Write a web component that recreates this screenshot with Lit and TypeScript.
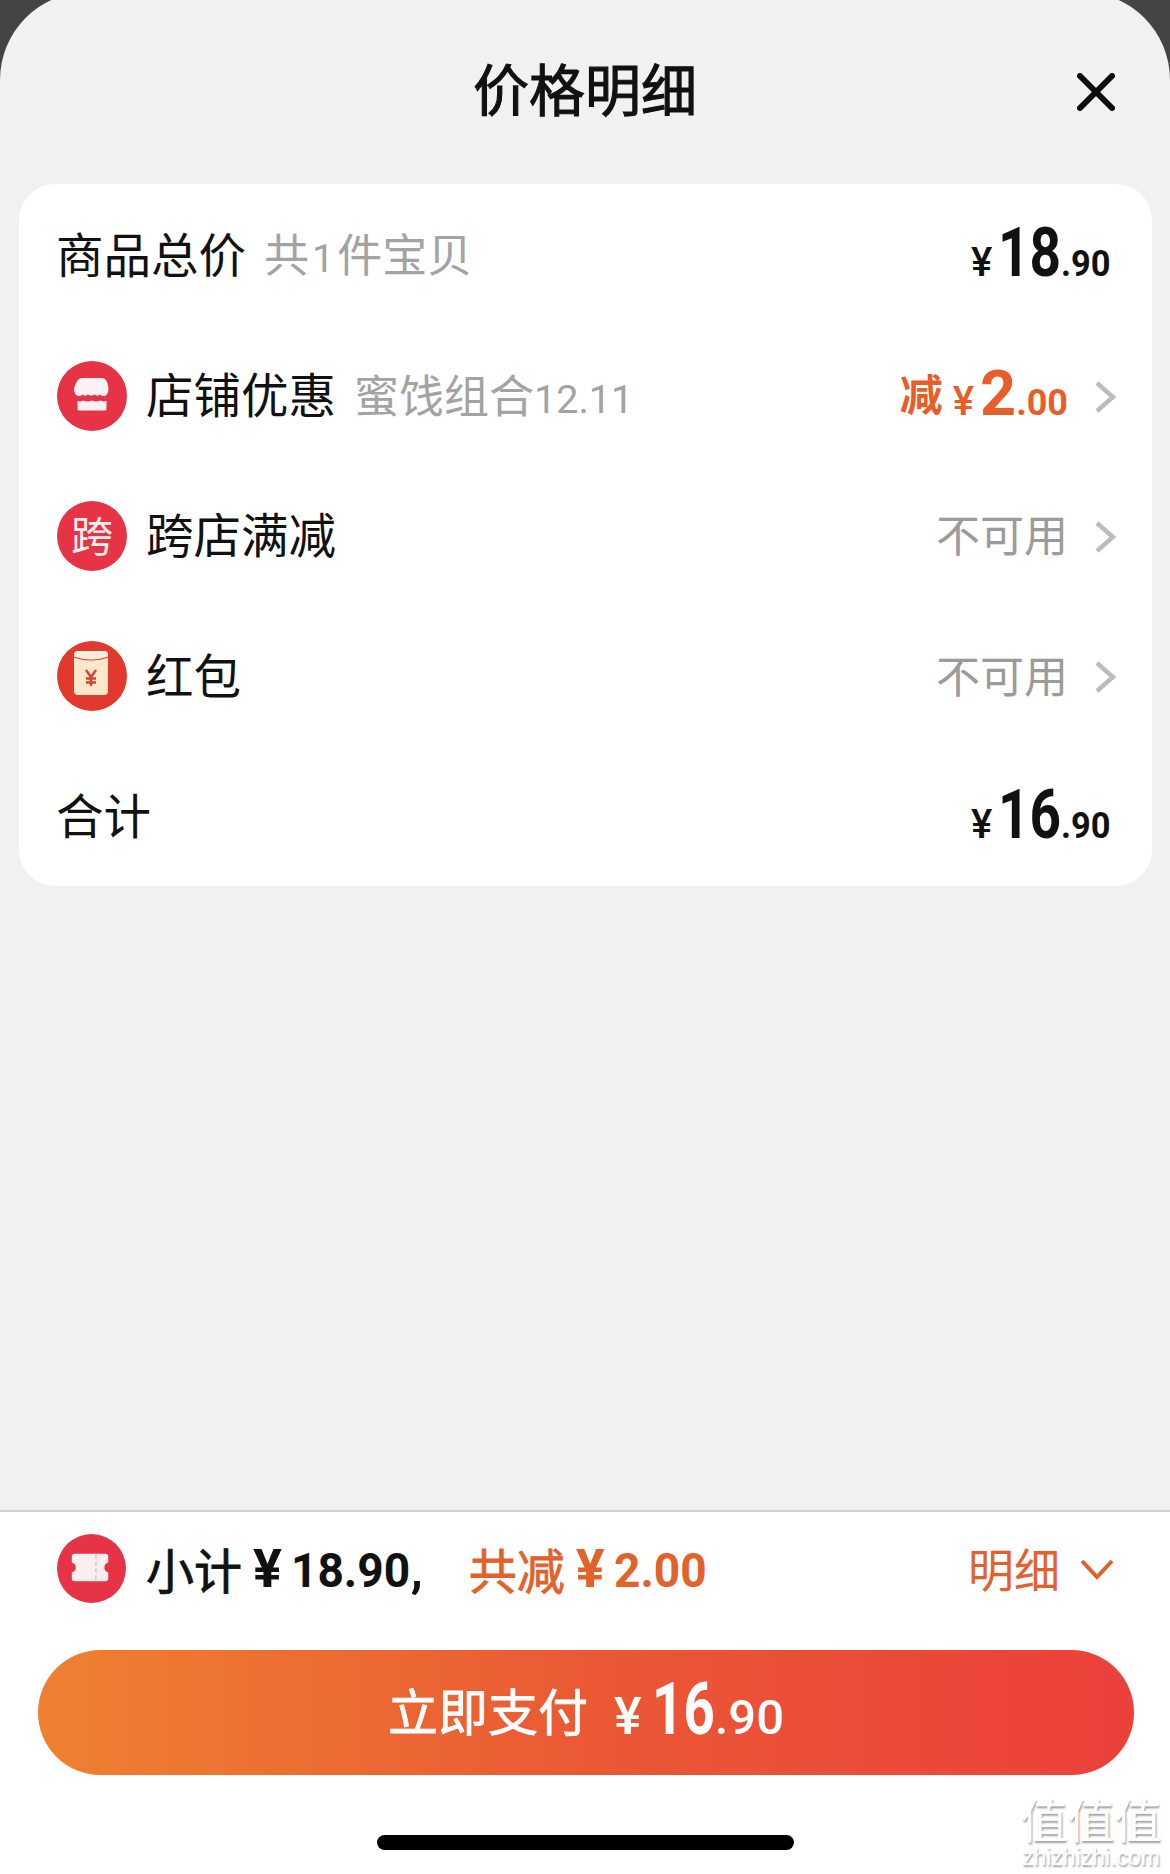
import { LitElement, html, css, svg } from 'lit';
import { customElement } from 'lit/decorators.js';

const chevron = html`<svg class="chev" viewBox="0 0 22 34"><path d="M3 3l16 14L3 31" /></svg>`;

// price with small currency sign, big integer part and small decimals
function price(int: string, dec: string, cls = '') {
  return html`<span class="price ${cls}"><span class="yen">¥</span><span class="int">${int}</span><span class="dec">.${dec}</span></span>`;
}

const shopIcon = svg`
  <circle cx="35" cy="35" r="35" fill="#e73346" />
  <path d="M25 17h20c3.500 0 6 4 6.500 10.500.2 3-1 6-3 7-2 1-4 .5-5.500-1-1.500 1.500-4 1.500-5.500 0-1.500 1.500-5 1.500-6.500 0-1.500 1.500-4 1.500-5.500 0-1.500 1.500-3.500 2-5.500 1-2-1-3.200-4-3-7C19 21 21.500 17 25 17z" fill="#fdf1f1" />
  <path d="M20.500 40c2 .8 4 .6 6-.6 2.500 1.500 5 1.500 8.500 0 3 1.500 6 1.500 8.500 0 2 1.200 4 1.400 6 .6v8c0 1-.7 1.500-1.500 1.500h-26c-.8 0-1.500-.5-1.500-1.500z" fill="#fdf1f1" />`;

const packetIcon = svg`
  <circle cx="35" cy="35" r="35" fill="#e2392e" />
  <rect x="17" y="10" width="34" height="44" rx="4" fill="#fbe8cc" />
  <path d="M17 14c0-2.500 1.500-4 4-4h26c2.500 0 4 1.500 4 4v2c-10 4-24 4-34 0z" fill="#f9efe0" />
  <path d="M17 16c10 4 24 4 34 0" fill="none" stroke="#d8452f" stroke-width="1.200" />
  <path d="M29 29l5 7 5-7M34 36v9M29 37.500h10M29 41.500h10" fill="none" stroke="#d8402f" stroke-width="2.400" />`;

const ticketIcon = svg`
  <circle cx="35" cy="35" r="35" fill="#e73346" />
  <path d="M18 20h31c2 0 3 1 3 3v6c-2.500.5-4 2.500-4 5s1.500 4.500 4 5v6c0 2-1 3-3 3H18c-2 0-3-1-3-3v-6c2.500-.5 4-2.500 4-5s-1.500-4.500-4-5v-6c0-2 1-3 3-3z" fill="#fbeeee" />
  <path d="M39.500 21v26" stroke="#e9b9bc" stroke-width="1.500" stroke-dasharray="4 3" />`;

@customElement('app-root')
export class AppRoot extends LitElement {
  static styles = css`
    :host {
      display: block;
      width: 1170px;
      height: 1874px;
      background: #444;
      overflow: hidden;
      font-family: 'Noto Sans CJK SC', 'Liberation Sans', sans-serif;
      color: #111;
    }
    .sheet {
      position: relative;
      height: 1874px;
      margin-top: -8px;
      padding-top: 8px;
      box-sizing: content-box;
      border-radius: 88px 88px 0 0;
      background: #f1f1f1;
      display: flex;
      flex-direction: column;
    }
    .head {
      height: 184px;
      flex: none;
      display: flex;
      justify-content: center;
      position: relative;
    }
    .title {
      font-size: 56px;
      -webkit-text-stroke: 1.1px #111;
      line-height: 174px;
    }
    .close {
      position: absolute;
      left: 1077px;
      top: 73px;
      width: 38px;
      height: 38px;
    }
    .close path {
      fill: none;
      stroke: #0d0d0d;
      stroke-width: 6;
      stroke-linecap: round;
    }
    .card {
      margin: 0 18px 0 19px;
      background: #fff;
      border-radius: 36px;
      flex: none;
      display: flex;
      flex-direction: column;
    }
    .row {
      height: 140.4px;
      display: flex;
      align-items: center;
      padding: 0 36px 0 37px;
      font-size: 47.5px;
    }
    .label {
      margin-bottom: 4px;
    }
    .row .ico {
      width: 70px;
      height: 70px;
      margin: 2px 19px 0 1px;
      flex: none;
      display: block;
    }
    .kua {
      width: 70px;
      height: 70px;
      margin: 2px 19px 0 1px;
      border-radius: 50%;
      background: #e73346;
      color: #fdeff0;
      font-size: 42px;
      line-height: 66px;
      text-align: center;
      flex: none;
    }
    .note {
      color: #a3a3a3;
      font-size: 45px;
      margin: 0 0 3px 18px;
    }
    .note .num {
      font-family: 'Roboto', sans-serif;
      font-size: 39.5px;
    }
    .note .one {
      margin: 0 3px;
    }
    .grow {
      flex: 1;
    }
    .off {
      color: #9b9b9b;
      font-size: 44px;
      margin: 0 26px 3px 0;
    }
    .chev {
      width: 22px;
      height: 34px;
      margin-top: 4px;
      flex: none;
    }
    .chev path {
      fill: none;
      stroke: #bcbcbc;
      stroke-width: 4.500;
    }
    .price {
      font-family: 'Roboto', sans-serif;
      font-weight: 700;
      display: inline-flex;
      align-items: baseline;
      white-space: nowrap;
      margin: 0 5px 2px 0;
    }
    .yen {
      font-weight: 500;
      font-size: 40px;
      margin-right: 6px;
    }
    /* Roboto digits are wider than the reference's, so squeeze them */
    .int {
      display: inline-block;
      font-size: 68px;
      transform: scaleX(0.81);
      transform-origin: left;
      margin-right: -0.217em;
    }
    .dec {
      display: inline-block;
      font-size: 37px;
      transform: scaleX(0.93);
      transform-origin: left;
      margin-right: -0.1em;
    }
    .sub-wrap {
      display: flex;
      align-items: baseline;
      gap: 10px;
      color: #e85d2a;
      margin: 0 26px 3px 0;
    }
    .jian {
      font-size: 43px;
      font-weight: 700;
      transform: translateY(-4px);
    }
    .sub-wrap .price {
      margin: 0;
    }
    .sub-wrap .int {
      font-size: 63px;
      transform: none;
      margin-right: 0;
    }
    .sub-wrap .dec {
      font-size: 36px;
      transform: none;
      margin-right: 0;
    }
    .foot {
      flex: none;
      height: 362px;
      background: #fff;
      border-top: 2px solid #d2d2d2;
      display: flex;
      flex-direction: column;
      margin-top: auto;
    }
    .sum {
      height: 113px;
      flex: none;
      display: flex;
      align-items: center;
      padding: 0 56px 0 57px;
      font-size: 48px;
    }
    .sum .ico {
      width: 69px;
      height: 69px;
      margin-right: 20px;
      flex: none;
      display: block;
    }
    .mid {
      -webkit-text-stroke: 0.8px currentColor;
      margin-bottom: 2px;
    }
    .mono {
      font-family: 'Roboto', sans-serif;
      font-weight: 700;
      font-size: 49px;
      margin-top: 3px;
    }
    .squeeze {
      display: inline-block;
      transform: scaleX(0.94);
      transform-origin: left;
    }
    .wide {
      margin-right: -7px;
    }
    .narrow {
      margin-right: -6px;
    }
    .yen2 {
      font-size: 54px;
      margin: 0 9px 0 11px;
    }
    .orange {
      color: #e2622c;
    }
    .gap {
      margin-left: 46px;
    }
    .mx {
      font-size: 46px;
      color: #e2622c;
      margin-bottom: 3px;
    }
    .down {
      width: 34px;
      height: 22px;
      margin-left: 20px;
      flex: none;
    }
    .down path {
      fill: none;
      stroke: #e2622c;
      stroke-width: 4;
    }
    .pay {
      margin: 25px 36px 0 38px;
      height: 125px;
      border-radius: 63px;
      background: linear-gradient(90deg, #ee8130, #ea5934 50%, #ec403b);
      color: #fff;
      display: flex;
      align-items: center;
      justify-content: center;
      flex: none;
      font-size: 50px;
    }
    .pay-label {
      -webkit-text-stroke: 0.8px #fff;
      margin-bottom: 7px;
    }
    .pay .price {
      margin: 0 0 7px 26px;
    }
    .pay .yen {
      font-size: 52px;
      margin-right: 10px;
    }
    .pay .int {
      font-size: 72px;
      transform: scaleX(0.76);
      margin-right: -0.27em;
    }
    .pay .dec {
      font-size: 49px;
      font-weight: 500;
      transform: none;
      margin-right: 0;
    }
    .home {
      width: 417px;
      height: 15px;
      border-radius: 8px;
      background: #000;
      margin: 60px auto 0 377px;
      flex: none;
    }
    .mark {
      position: absolute;
      left: 1018px;
      top: 1802px;
      width: 146px;
      text-align: center;
      color: #fff;
      text-shadow: 1px 2px 2px #a0a0a0;
    }
    .mark .zh {
      font-size: 47px;
      line-height: 48px;
    }
    .mark .en {
      font-family: 'Liberation Sans', sans-serif;
      font-size: 23px;
      line-height: 22px;
      margin-top: 4px;
    }
  `;

  render() {
    return html`
      <div class="sheet">
        <div class="head">
          <div class="title">价格明细</div>
          <svg class="close" viewBox="0 0 38 38"><path d="M3 3l32 32M35 3L3 35" /></svg>
        </div>
        <div class="card">
          <div class="row">
            <span class="label">商品总价</span><span class="note">共<span class="num one">1</span>件宝贝</span>
            <span class="grow"></span>${price('18', '90')}
          </div>
          <div class="row">
            <svg class="ico" viewBox="0 0 70 70">${shopIcon}</svg>
            <span class="label">店铺优惠</span><span class="note">蜜饯组合<span class="num">12.11</span></span>
            <span class="grow"></span>
            <span class="sub-wrap"><span class="jian">减</span>${price('2', '00')}</span>${chevron}
          </div>
          <div class="row">
            <div class="kua">跨</div>
            <span class="label">跨店满减</span>
            <span class="grow"></span><span class="off">不可用</span>${chevron}
          </div>
          <div class="row">
            <svg class="ico" viewBox="0 0 70 70">${packetIcon}</svg>
            <span class="label">红包</span>
            <span class="grow"></span><span class="off">不可用</span>${chevron}
          </div>
          <div class="row">
            <span class="label">合计</span>
            <span class="grow"></span>${price('16', '90')}
          </div>
        </div>
        <div class="foot">
          <div class="sum">
            <svg class="ico" viewBox="0 0 70 70">${ticketIcon}</svg>
            <span class="mid">小计</span><span class="mono yen2">¥</span><span class="mono squeeze wide">18.90</span><span class="mono">,</span>
            <span class="mid orange gap">共减</span><span class="mono yen2 orange">¥</span><span class="mono squeeze narrow orange">2.00</span>
            <span class="grow"></span>
            <span class="mx">明细</span>
            <svg class="down" viewBox="0 0 34 22"><path d="M2 3l15 16L32 3" /></svg>
          </div>
          <div class="pay">
            <span class="pay-label">立即支付</span>${price('16', '90')}
          </div>
          <div class="home"></div>
        </div>
        <div class="mark">
          <div class="zh">值值值</div>
          <div class="en">zhizhizhi.com</div>
        </div>
      </div>
    `;
  }
}
